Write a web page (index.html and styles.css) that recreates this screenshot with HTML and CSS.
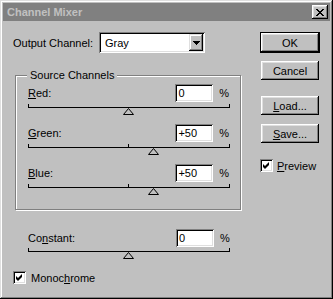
FILE: index.html
```html
<html>
<head>
    <link rel="stylesheet" href="styles.css">
</head>
<body>
    <div class="window">
        <div class="titlebar">
            <span class="title">Channel Mixer</span>
            <span class="closeBtn">
                <svg width="8" height="7" viewBox="0 0 8 7"><path d="M0 0h2v1h-2z M6 0h2v1h-2z M1 1h2v1h-2z M5 1h2v1h-2z M2 2h4v1h-4z M3 3h2v1h-2z M2 4h4v1h-4z M1 5h2v1h-2z M5 5h2v1h-2z M0 6h2v1h-2z M6 6h2v1h-2z" fill="#000"/></svg>
            </span>
        </div>
        <div class="content">
            <div class="main">
                <div class="outputRow">
                    <span class="outputLabel">Output Channel:</span>
                    <div class="select">
                        <span class="selectText">Gray</span>
                        <span class="dropBtn">
                            <svg width="7" height="4" viewBox="0 0 7 4"><path d="M0 0h7v1h-1v1h-1v1h-1v1h-1v-1h-1v-1h-1v-1h-1z" fill="#000"/></svg>
                        </span>
                    </div>
                </div>

                <div class="group">
                    <span class="groupTitle">Source Channels</span>

                    <div class="channel">
                        <div class="fieldRow">
                            <span class="fieldLabel"><u>R</u>ed:</span>
                            <span class="field">0</span>
                            <span class="pct">%</span>
                        </div>
                        <div class="slider">
                            <svg class="thumb" style="left: 94px" width="11" height="7" viewBox="0 0 11 7"><path d="M5.5 0.5 L10.5 6.5 H0.5 Z" fill="none" stroke="#000"/></svg>
                        </div>
                    </div>

                    <div class="channel">
                        <div class="fieldRow">
                            <span class="fieldLabel"><u>G</u>reen:</span>
                            <span class="field">+50</span>
                            <span class="pct">%</span>
                        </div>
                        <div class="slider">
                            <span class="midTick"></span>
                            <svg class="thumb" style="left: 119px" width="11" height="7" viewBox="0 0 11 7"><path d="M5.5 0.5 L10.5 6.5 H0.5 Z" fill="none" stroke="#000"/></svg>
                        </div>
                    </div>

                    <div class="channel">
                        <div class="fieldRow">
                            <span class="fieldLabel"><u>B</u>lue:</span>
                            <span class="field">+50</span>
                            <span class="pct">%</span>
                        </div>
                        <div class="slider">
                            <span class="midTick"></span>
                            <svg class="thumb" style="left: 119px" width="11" height="7" viewBox="0 0 11 7"><path d="M5.5 0.5 L10.5 6.5 H0.5 Z" fill="none" stroke="#000"/></svg>
                        </div>
                    </div>
                </div>

                <div class="channel constant">
                    <div class="fieldRow">
                        <span class="fieldLabel">Co<u>n</u>stant:</span>
                        <span class="field">0</span>
                        <span class="pct">%</span>
                    </div>
                    <div class="slider">
                        <svg class="thumb" style="left: 94px" width="11" height="7" viewBox="0 0 11 7"><path d="M5.5 0.5 L10.5 6.5 H0.5 Z" fill="none" stroke="#000"/></svg>
                    </div>
                </div>

                <div class="checkRow mono">
                    <span class="checkbox">
                        <svg width="13" height="13" viewBox="0 0 13 13"><path d="M3 5l2 2 4-4v3l-4 4-2-2z" fill="#000"/></svg>
                    </span>
                    <span>Monoc<u>h</u>rome</span>
                </div>
            </div>

            <div class="buttons">
                <div class="btn default">OK</div>
                <div class="btn cancel">Cancel</div>
                <div class="btn load"><u>L</u>oad...</div>
                <div class="btn save"><u>S</u>ave...</div>
                <div class="checkRow preview">
                    <span class="checkbox">
                        <svg width="13" height="13" viewBox="0 0 13 13"><path d="M3 5l2 2 4-4v3l-4 4-2-2z" fill="#000"/></svg>
                    </span>
                    <span><u>P</u>review</span>
                </div>
            </div>
        </div>
    </div>
</body>
</html>
```

FILE: styles.css
```css
body {
    margin: 0;
    background-color: #c0c0c0;
    font-family: "Liberation Sans", Arial, sans-serif;
    font-size: 11px;
    color: #000;
}

.window {
    width: 333px;
    height: 299px;
    box-sizing: border-box;
    padding: 3px;
    background-color: #c0c0c0;
    box-shadow: inset -1px -1px #000, inset 1px 1px #dfdfdf, inset -2px -2px #808080, inset 2px 2px #fff;
}

.titlebar {
    height: 18px;
    background-color: #808080;
    display: flex;
    align-items: center;
    justify-content: space-between;
    padding: 0 2px 0 4px;
}
.title {
    color: #c0c0c0;
    font-weight: bold;
}
.closeBtn {
    width: 16px;
    height: 14px;
    box-sizing: border-box;
    background-color: #c0c0c0;
    box-shadow: inset -1px -1px #000, inset 1px 1px #fff, inset -2px -2px #808080, inset 2px 2px #dfdfdf;
    display: flex;
    align-items: center;
    justify-content: center;
}

.content {
    display: flex;
}
.main {
    padding: 11px 0 0 10px;
}

.outputRow {
    display: flex;
    align-items: center;
    height: 21px;
}
.outputLabel {
    width: 86px;
}
.select {
    width: 106px;
    height: 21px;
    box-sizing: border-box;
    background-color: #fff;
    box-shadow: inset 1px 1px #808080, inset -1px -1px #fff, inset 2px 2px #000, inset -2px -2px #dfdfdf;
    display: flex;
    align-items: center;
    padding: 2px 2px 2px 6px;
}
.selectText {
    flex: 1;
}
.dropBtn {
    width: 14px;
    height: 17px;
    box-sizing: border-box;
    background-color: #c0c0c0;
    box-shadow: inset -1px -1px #000, inset 1px 1px #dfdfdf, inset -2px -2px #808080, inset 2px 2px #fff;
    display: flex;
    align-items: center;
    justify-content: center;
}

.group {
    width: 226px;
    box-sizing: border-box;
    margin: 22px 0 0 2px;
    border: 1px solid #808080;
    box-shadow: 1px 1px 0 #fff, inset 1px 1px 0 #fff;
    padding: 0 11px 21px 12px;
}
.groupTitle {
    display: block;
    width: fit-content;
    line-height: 13px;
    margin: -7px 0 0 -1px;
    padding: 0 3px;
    background-color: #c0c0c0;
}
.group .channel:first-of-type {
    margin-top: 2px;
}
.channel {
    margin-bottom: 16px;
}
.group .channel:last-child {
    margin-bottom: 0;
}

.fieldRow {
    display: flex;
    align-items: center;
    height: 18px;
}
.fieldLabel {
    width: 148px;
}
.field {
    width: 38px;
    height: 18px;
    box-sizing: border-box;
    background-color: #fff;
    box-shadow: inset 1px 1px #808080, inset -1px -1px #fff, inset 2px 2px #000, inset -2px -2px #dfdfdf;
    padding: 0 0 0 3px;
    line-height: 18px;
}
.pct {
    margin-left: 6px;
}

.slider {
    position: relative;
    width: 200px;
    height: 3px;
    margin-top: 2px;
    border: 1px solid #000;
    border-top: none;
}
.thumb {
    position: absolute;
    top: 4px;
}
.midTick {
    position: absolute;
    left: 99px;
    top: 0;
    width: 1px;
    height: 3px;
    background-color: #000;
}

.constant {
    margin: 19px 0 0 15px;
}
.constant .slider {
    margin-top: 1px;
}

.checkRow {
    display: flex;
    align-items: center;
}
.checkbox {
    width: 13px;
    height: 13px;
    box-sizing: border-box;
    background-color: #fff;
    box-shadow: inset 1px 1px #808080, inset -1px -1px #fff, inset 2px 2px #000, inset -2px -2px #dfdfdf;
    margin-right: 5px;
}
.checkbox svg {
    display: block;
}
.mono {
    margin-top: 19px;
}

.buttons {
    margin-left: auto;
    margin-right: 10px;
    padding-top: 11px;
    width: 60px;
    display: flex;
    flex-direction: column;
}
.btn {
    height: 19px;
    margin: 0 1px;
    box-sizing: border-box;
    box-shadow: inset -1px -1px #000, inset 1px 1px #fff, inset -2px -2px #808080, inset 2px 2px #dfdfdf;
    display: flex;
    align-items: center;
    justify-content: center;
}
.default {
    height: 21px;
    margin: 0;
    border: 1px solid #000;
}
.cancel {
    margin-top: 8px;
}
.load {
    margin-top: 16px;
}
.save {
    margin-top: 9px;
}
.preview {
    margin-top: 16px;
}
.preview .checkbox {
    margin-right: 4px;
}
```
